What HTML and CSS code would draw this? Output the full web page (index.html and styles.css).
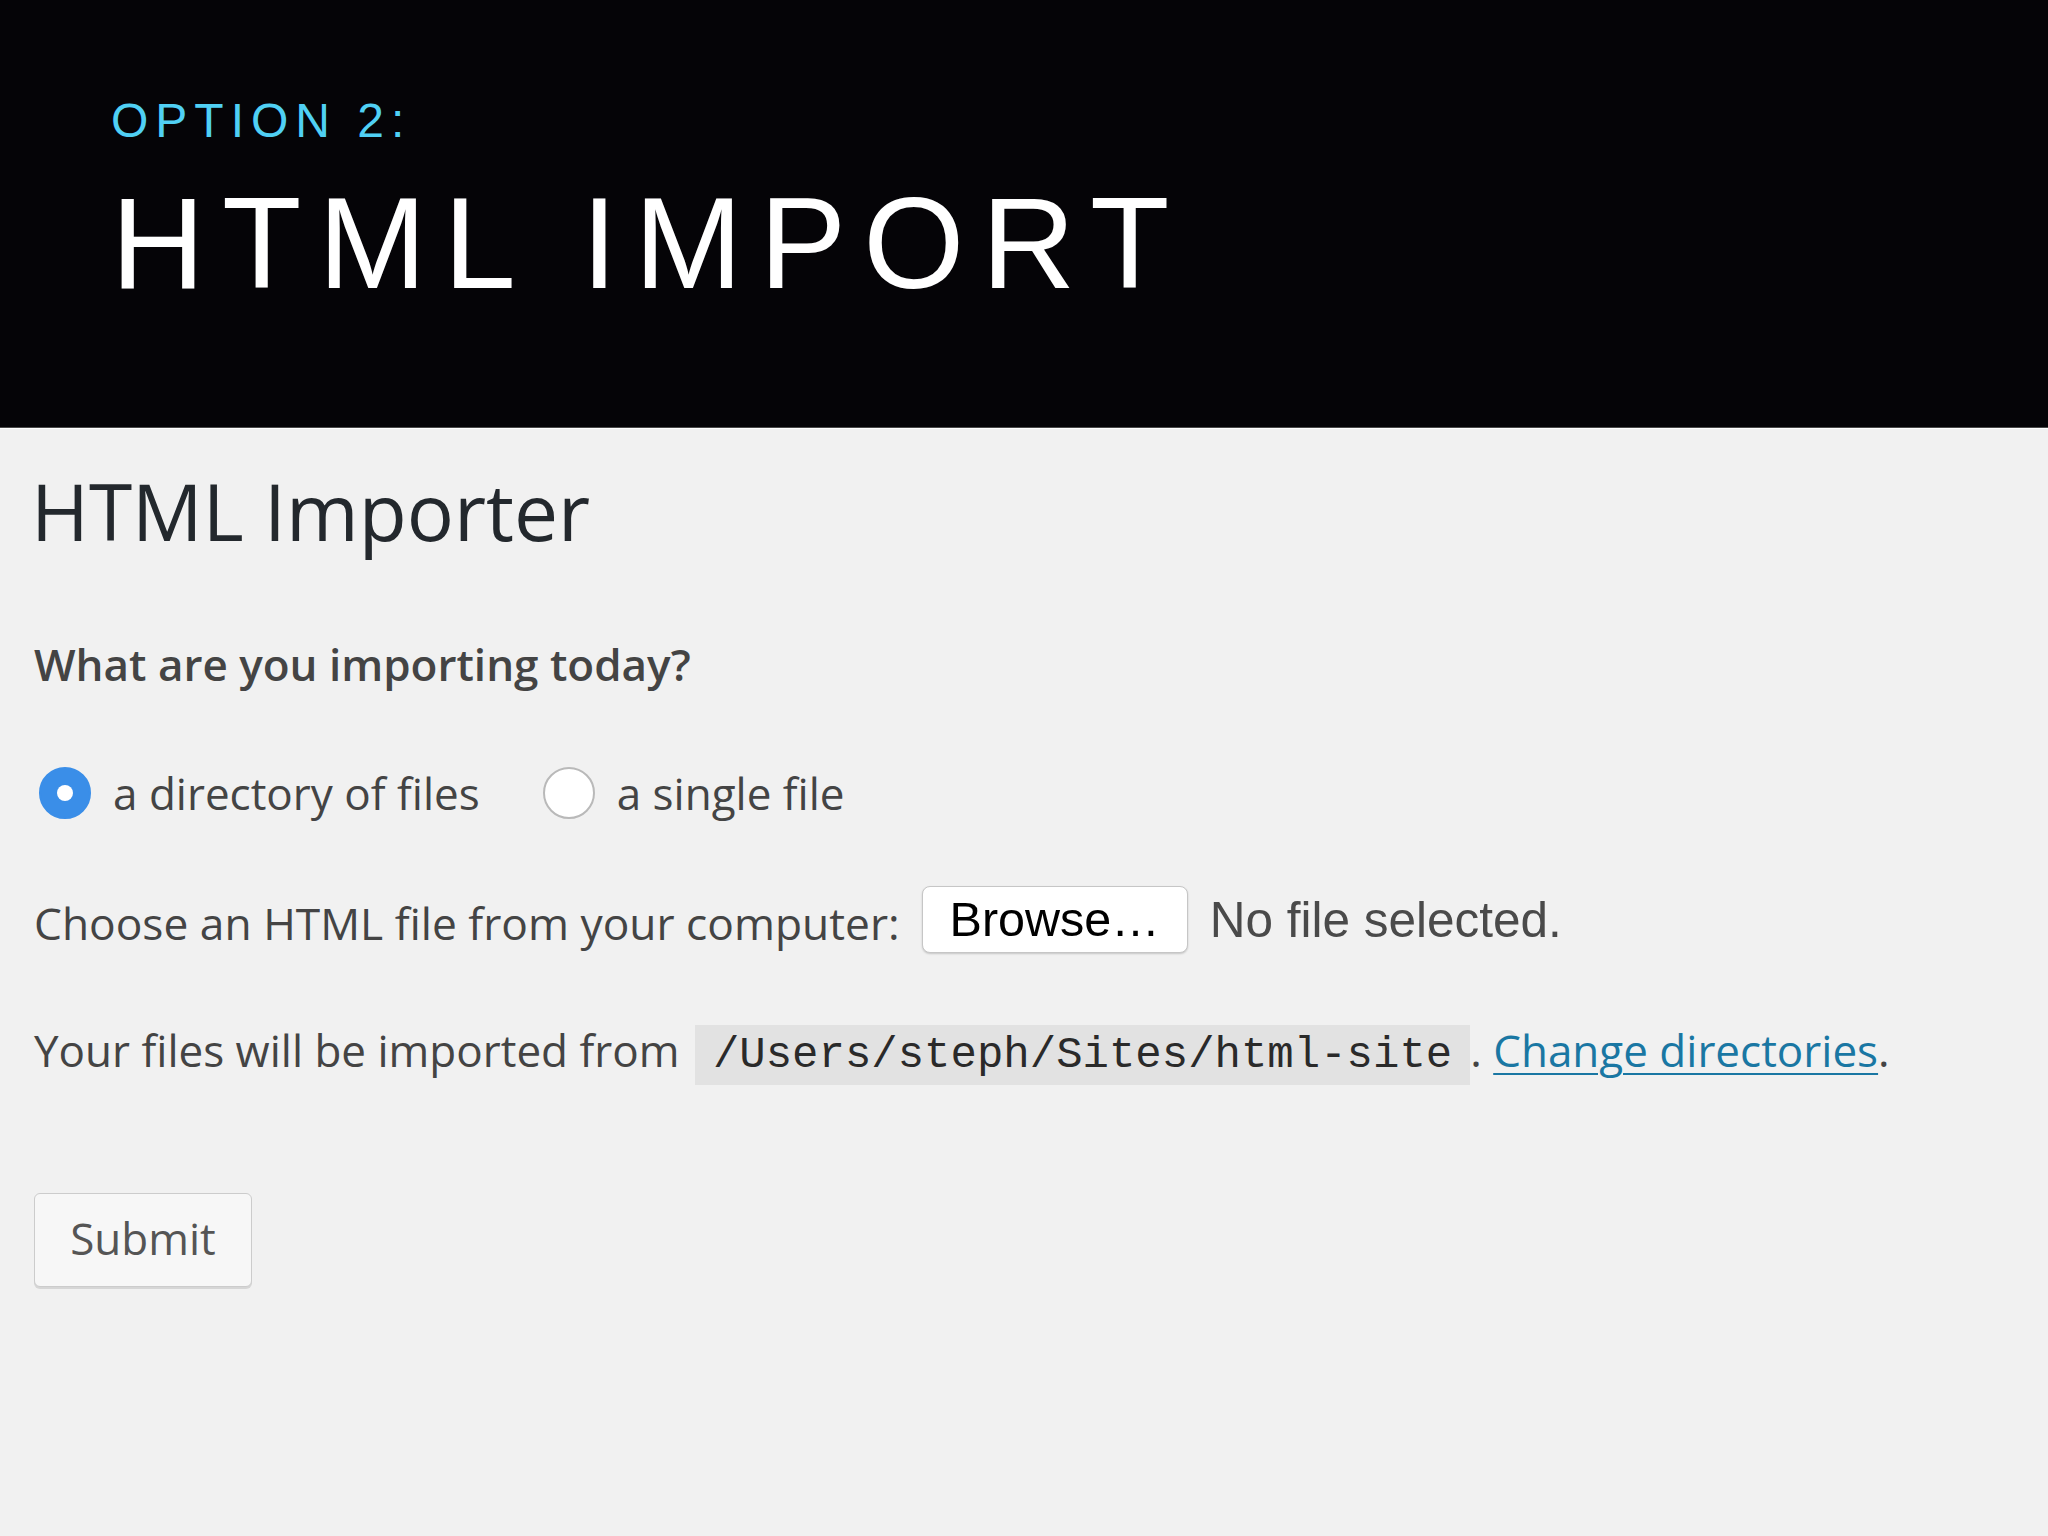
FILE: index.html
```html
<!DOCTYPE html>
<html lang="en">
<head>
<meta charset="utf-8">
<title>HTML Import</title>
<link rel="stylesheet" href="styles.css">
</head>
<body>
<header class="slide-head">
  <div class="kicker">OPTION 2:</div>
  <div class="title">HTML IMPORT</div>
</header>
<main class="wrap">
  <h1 class="page-title">HTML Importer</h1>
  <p class="question">What are you importing today?</p>
  <div class="radios">
    <label class="radio-opt"><span class="radio checked"></span><span class="radio-text">a directory of files</span></label>
    <label class="radio-opt second"><span class="radio"></span><span class="radio-text">a single file</span></label>
  </div>
  <div class="file-row">
    <span class="file-label">Choose an HTML file from your computer:</span>
    <span class="browse">Browse…</span>
    <span class="nofile">No file selected.</span>
  </div>
  <p class="path-row">Your files will be imported from <code class="path">/Users/steph/Sites/html-site</code>. <a href="#" class="link">Change directories</a>.</p>
  <button class="submit" type="button">Submit</button>
</main>
</body>
</html>
```
FILE: styles.css
```css
html, body {
  margin: 0;
  padding: 0;
}

body {
  background: #f1f1f1;
  font-family: "Open Sans", "Noto Sans", sans-serif;
  color: #444;
  width: 2048px;
  height: 1536px;
  overflow: hidden;
}

.slide-head {
  box-sizing: border-box;
  height: 428px;
  background: #050407;
  border-bottom: 1px solid #4a4a4a;
  box-shadow: 0 1px 0 #ffffff;
  padding: 97px 0 0 111px;
}

.kicker {
  font-family: "Liberation Sans", Arial, sans-serif;
  font-size: 48px;
  line-height: 48px;
  letter-spacing: 7px;
  color: #50d0f4;
}

.title {
  margin-top: 33px;
  font-family: "Liberation Sans", Arial, sans-serif;
  font-size: 130px;
  line-height: 130px;
  letter-spacing: 17px;
  color: #ffffff;
}

.wrap {
  padding: 36px 32px 0 34px;
}

.page-title {
  margin: 0 0 0 -3px;
  font-size: 78.5px;
  line-height: 94px;
  font-weight: 400;
  color: #23282d;
}

.question {
  margin: 78px 0 0 0;
  font-size: 44px;
  line-height: 56px;
  font-weight: 600;
  color: #444;
}

.radios {
  margin-top: 71px;
  display: flex;
  align-items: center;
  height: 60px;
}

.radio-opt {
  display: flex;
  align-items: center;
  font-size: 44px;
  line-height: 60px;
  color: #444;
}

.radio-opt.second {
  margin-left: 63px;
}

.radio {
  box-sizing: border-box;
  width: 52px;
  height: 52px;
  border-radius: 50%;
  background: #fff;
  border: 2px solid #b9b9b9;
  margin-right: 22px;
  display: flex;
  align-items: center;
  justify-content: center;
}

.radios .radio-opt:first-child .radio {
  margin-left: 5px;
}

.radio.checked {
  background: #3a8ee8;
  border-color: #3a8ee8;
}

.radio.checked::after {
  content: "";
  width: 16px;
  height: 16px;
  border-radius: 50%;
  background: #ffffff;
}

.file-row {
  margin-top: 63px;
  display: flex;
  align-items: flex-start;
}

.file-label {
  margin-top: 7px;
  font-size: 44.3px;
  line-height: 60px;
  color: #444;
}

.browse {
  box-sizing: border-box;
  margin-left: 22px;
  width: 266px;
  height: 67px;
  border: 1px solid #c6c6c6;
  border-radius: 8px;
  background: #ffffff;
  box-shadow: 0 1px 2px rgba(0, 0, 0, 0.18);
  font-family: "Liberation Sans", Arial, sans-serif;
  font-size: 48.5px;
  line-height: 65px;
  text-align: center;
  color: #000;
}

.nofile {
  margin-left: 22px;
  font-family: "Liberation Sans", Arial, sans-serif;
  font-size: 49.5px;
  line-height: 67px;
  color: #4a4a4a;
}

.path-row {
  margin: 67px 0 0 0;
  font-size: 44px;
  line-height: 60px;
  color: #444;
}

.path {
  display: inline-block;
  margin-left: 4px;
  padding: 0 18px;
  background: #e2e2e2;
  font-family: "Liberation Mono", "Courier New", monospace;
  font-size: 44px;
  line-height: 60px;
  color: #2a2a2a;
}

.link {
  color: #1a77a3;
  text-decoration: underline;
  text-decoration-thickness: 2px;
  text-underline-offset: 6px;
}

.submit {
  display: block;
  margin-top: 108px;
  box-sizing: border-box;
  width: 218px;
  height: 94px;
  padding: 0 0 4px 0;
  border: 1px solid #cccccc;
  border-radius: 6px;
  background: #f7f7f7;
  box-shadow: 0 2px 0 #d6d6d6;
  font-family: "Open Sans", "Noto Sans", sans-serif;
  font-size: 44px;
  line-height: 88px;
  color: #555;
  text-align: center;
}
```
